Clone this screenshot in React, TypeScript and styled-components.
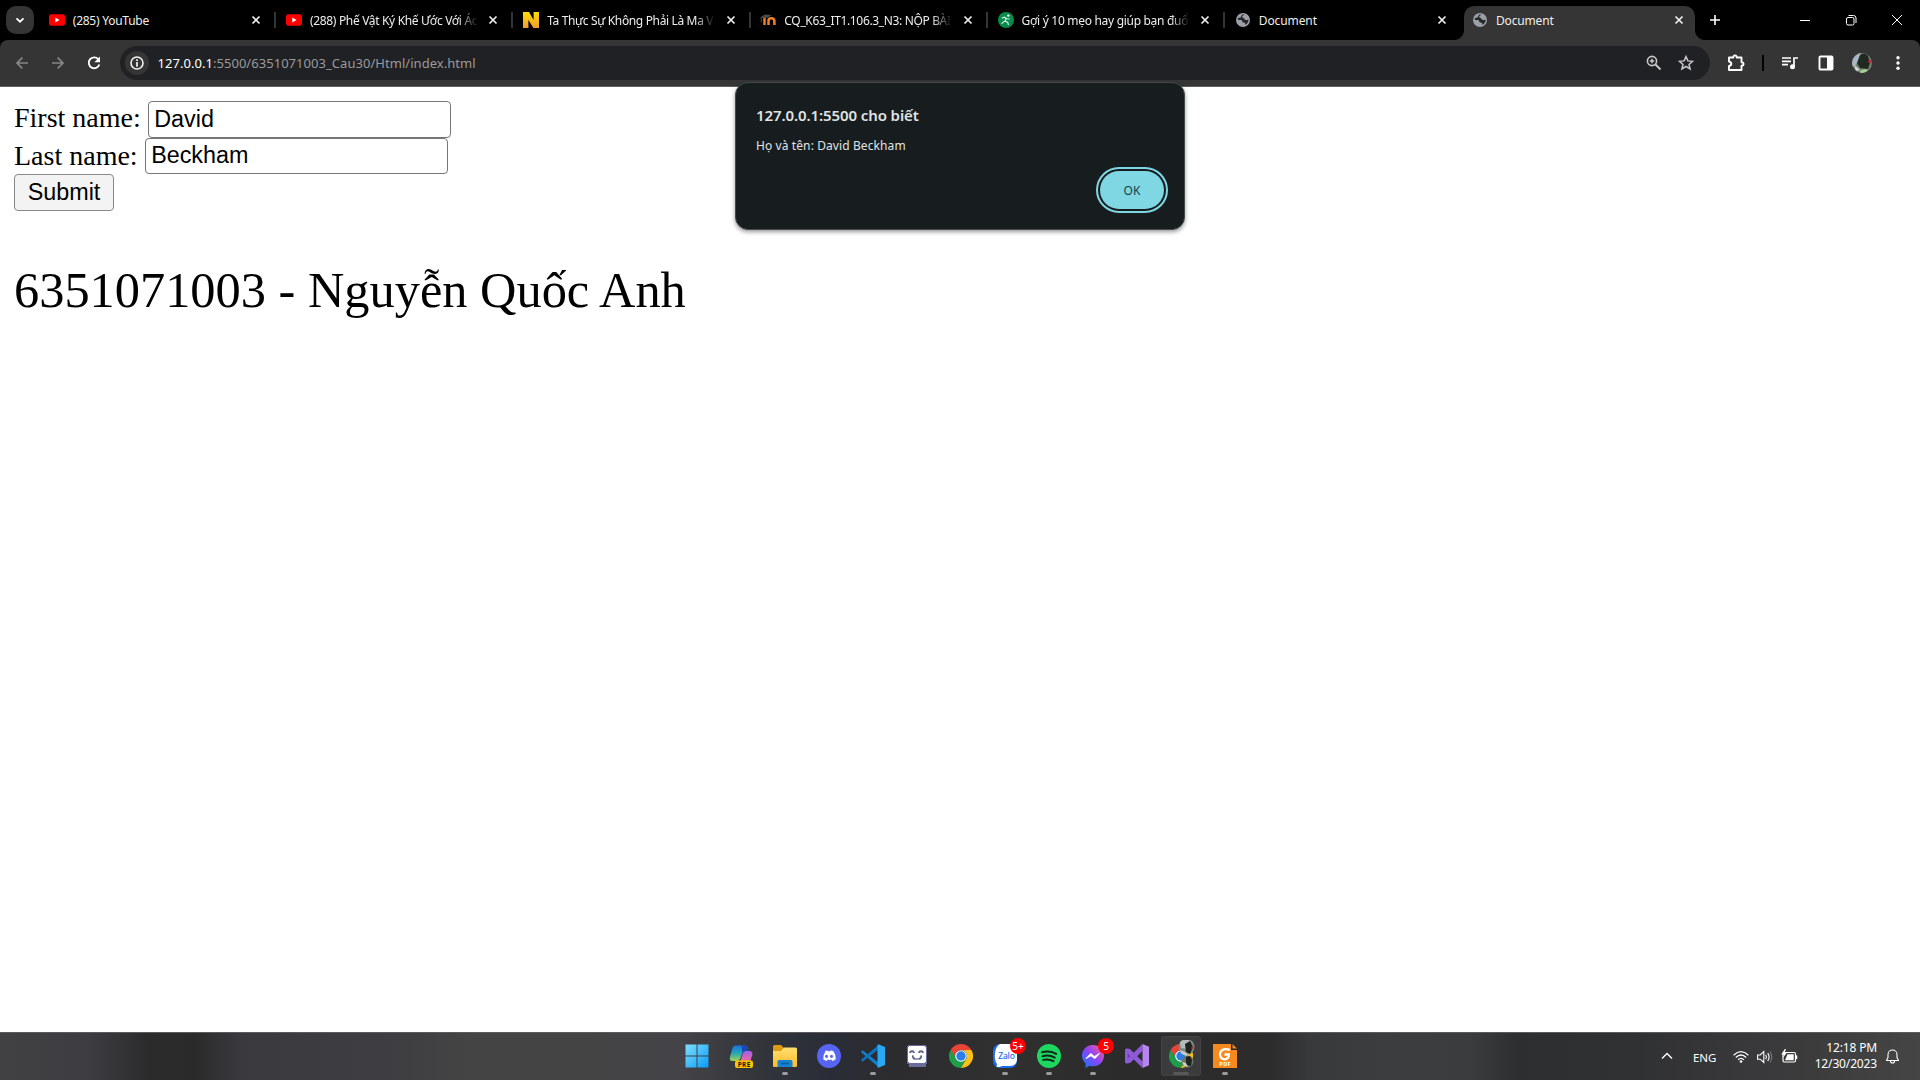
import React from "react";
import styled, { createGlobalStyle, css } from "styled-components";

const ui = `"Noto Sans", "Open Sans", sans-serif`;

const Global = createGlobalStyle`
  html, body { margin: 0; padding: 0; background: #fff; }
  * { box-sizing: border-box; }
`;

const Screen = styled.div`
  width: 1920px;
  height: 1080px;
  overflow: hidden;
  display: flex;
  flex-direction: column;
  font-family: ${ui};
  position: relative;
`;

/* ---------- tab strip ---------- */
const TabStrip = styled.div`
  height: 40px;
  background: #000;
  display: flex;
  align-items: stretch;
  flex: none;
`;
const TabSearch = styled.div`
  width: 28px;
  height: 28px;
  margin: 6px 4px 0 6px;
  border-radius: 10px;
  background: #353535;
  display: grid;
  place-items: center;
`;
const Tab = styled.div<{ $active?: boolean; $sep?: boolean }>`
  width: ${(p) => (p.$active ? 231 : 237.2)}px;
  height: ${(p) => (p.$active ? 34 : 40)}px;
  margin: ${(p) => (p.$active ? "6px 0 0 2.8px" : "0")};
  padding: ${(p) => (p.$active ? "0 8px 6px 8px" : "0 11px 0 10.8px")};
  display: flex;
  align-items: center;
  position: relative;
  flex: none;
  ${(p) =>
    p.$active &&
    css`
      background: #353535;
      border-radius: 10px 10px 0 0;
      &::before,
      &::after {
        content: "";
        position: absolute;
        bottom: 0;
        width: 10px;
        height: 10px;
      }
      &::before {
        left: -10px;
        background: radial-gradient(circle at 0 0, transparent 9.5px, #353535 10.5px);
      }
      &::after {
        right: -10px;
        background: radial-gradient(circle at 100% 0, transparent 9.5px, #353535 10.5px);
      }
    `}
  ${(p) =>
    p.$sep &&
    css`
      &::after {
        content: "";
        position: absolute;
        right: -1px;
        top: 12px;
        width: 2px;
        height: 16px;
        background: #353535;
      }
    `}
`;
const TabTitle = styled.div<{ $fade?: boolean; $ls: number }>`
  margin-left: 8px;
  width: 168px;
  font-size: 12px;
  line-height: 18px;
  letter-spacing: ${(p) => p.$ls}px;
  color: #eee;
  white-space: nowrap;
  overflow: hidden;
  flex: none;
  padding-top: 1px;
  ${(p) =>
    p.$fade &&
    css`
      mask-image: linear-gradient(90deg, #000 148px, transparent 168px);
    `}
`;
const TabClose = styled.svg`
  margin-left: auto;
  flex: none;
`;
const NewTab = styled.div`
  width: 40px;
  height: 40px;
  display: grid;
  place-items: center;
`;
const WindowButtons = styled.div`
  margin-left: auto;
  display: flex;
  width: 138px;
`;
const WinBtn = styled.div`
  width: 46px;
  height: 40px;
  display: grid;
  place-items: center;
`;

/* ---------- toolbar ---------- */
const ToolbarBack = styled.div`
  background: #000;
  flex: none;
`;
const Toolbar = styled.div`
  height: 47px;
  background: #353535;
  border-bottom: 1px solid #5e5e5e;
  border-radius: 8px 8px 0 0;
  display: flex;
  align-items: flex-start;
  padding-top: 6px;
`;
const NavBtn = styled.div<{ $w: number }>`
  width: ${(p) => p.$w}px;
  height: 34px;
  display: grid;
  place-items: center;
  flex: none;
`;
const NavGroup = styled.div`
  display: flex;
  flex: none;
  width: 120px;
  padding-left: 4px;
`;
const Omnibox = styled.div`
  width: 1590px;
  flex: none;
  height: 34px;
  border-radius: 17px;
  background: #202124;
  display: flex;
  align-items: center;
  padding: 0 8px 0 5px;
`;
const SiteInfo = styled.div`
  width: 24px;
  height: 24px;
  border-radius: 50%;
  background: #353535;
  display: grid;
  place-items: center;
`;
const Url = styled.div`
  margin-left: 8.5px;
  font-size: 13px;
  letter-spacing: 0.04px;
  line-height: 20px;
  color: #9a9a9b;
  white-space: nowrap;
  flex: 1;
  padding-bottom: 1px;
  b {
    font-weight: 400;
    color: #fff;
  }
`;
const VBar = styled.div`
  width: 2px;
  height: 16px;
  margin: 9px 8px 0 0;
  background: #000;
`;

/* ---------- page ---------- */
const Page = styled.main`
  height: 945px;
  background: #fff;
  padding: 14px;
  font-family: "Liberation Serif", "Times New Roman", serif;
  font-size: 28px;
  color: #000;
  flex: none;
`;
const FormRow = styled.label<{ $h: number }>`
  display: flex;
  height: ${(p) => p.$h}px;
  line-height: ${(p) => (p.$h > 36 ? 34 : 35)}px;
  white-space: pre;
`;
const Field = styled.input<{ $h: number }>`
  width: 303px;
  height: ${(p) => p.$h}px;
  border: 1px solid #767676;
  border-radius: 4px;
  padding: 0 5.5px ${(p) => (p.$h > 36 ? 0 : 2)}px;
  margin: 0;
  font: 23.33px "Liberation Sans", Arial, sans-serif;
  color: #000;
  background: #fff;
  outline: none;
`;
const Submit = styled.button`
  display: block;
  width: 100px;
  height: 37px;
  border: 1px solid #8a8a8a;
  border-radius: 4px;
  background: #f3f3f3;
  padding: 0;
  font: 23.33px "Liberation Sans", Arial, sans-serif;
  color: #000;
`;
const Student = styled.p`
  margin: 50px 0 0;
  font-size: 50.4px;
  line-height: 58px;
  white-space: nowrap;
`;

/* ---------- alert ---------- */
const Dialog = styled.section`
  position: absolute;
  left: 735px;
  top: 82px;
  width: 450px;
  height: 148px;
  border: 1px solid #414a4c;
  border-radius: 13px;
  background: #171d1f;
  box-shadow: 0 2px 4px rgba(0, 0, 0, 0.4);
  padding: 21px 20px;
  color: #e0e3e4;
  display: flex;
  flex-direction: column;
`;
const DialogTitle = styled.h1`
  margin: 0;
  font-size: 15px;
  font-weight: 600;
  line-height: 22px;
  letter-spacing: -0.1px;
`;
const DialogText = styled.div`
  margin-top: 11px;
  font-size: 12px;
  line-height: 18px;
  letter-spacing: 0.1px;
`;
const OkButton = styled.button`
  align-self: flex-end;
  margin: 16px 0 0;
  width: 64px;
  height: 38px;
  flex: none;
  border: 0;
  border-radius: 19px;
  background: #7fd7e3;
  color: #12434c;
  font: 400 12px ${ui};
  outline: 2px solid #7fd7e3;
  outline-offset: 2px;
  padding: 0;
`;

/* ---------- taskbar ---------- */
const Taskbar = styled.footer`
  height: 48px;
  flex: none;
  border-top: 1px solid #5b5b5d;
  background: linear-gradient(
    90deg,
    #414142 0, #3d3c41 90px, #2b2b2c 150px, #2a2a2b 195px, #3a393e 240px, #3d3d42 380px,
    #444 470px, #444 580px, #444347 680px, #33353b 760px, #2a2d37 830px, #2c2c2e 900px,
    #303031 1000px, #2b2b2c 1120px, #2c2c2d 1270px, #38393b 1310px, #3c3d3f 1390px, #3b3c3e 1470px,
    #2d2e2f 1520px, #303132 1640px, #38383a 1740px, #3b3b3c 1800px, #454546 1920px
  );
  display: grid;
  grid-template-columns: 675px 1fr auto;
`;
const Apps = styled.div`
  display: flex;
  grid-column: 2;
  padding-top: 3px;
`;
const AppSlot = styled.div<{ $active?: boolean }>`
  width: 40px;
  height: 40px;
  margin: 0 2px;
  border-radius: 4px;
  position: relative;
  display: grid;
  place-items: center;
  flex: none;
  ${(p) =>
    p.$active &&
    css`
      background: #3b3b3d;
      box-shadow: inset 0 0 0 1px #434345;
    `}
`;
const Running = styled.i<{ $w: number }>`
  position: absolute;
  left: ${(p) => 20 - p.$w / 2}px;
  bottom: 1px;
  width: ${(p) => p.$w}px;
  height: 3px;
  border-radius: 2px;
  background: ${(p) => (p.$w > 8 ? "#58585a" : "#9b9b9d")};
`;
const Count = styled.span`
  position: absolute;
  right: -1px;
  top: 2px;
  width: 16px;
  height: 16px;
  border-radius: 50%;
  background: #f00;
  color: #fff;
  font-size: 10px;
  line-height: 16px;
  text-align: center;
`;
const Tray = styled.div`
  grid-column: 3;
  display: flex;
  align-items: center;
  color: #fff;
  padding-right: 20px;
  font-size: 12px;
`;
const Lang = styled.span`
  width: 24px;
  margin: 1px 16px 0 20px;
  font-size: 11.5px;
  letter-spacing: -0.1px;
`;
const Quick = styled.div`
  display: flex;
  gap: 8px;
`;
const Clock = styled.div`
  width: 70px;
  margin: 0 8px 1px 9px;
  text-align: right;
  line-height: 16px;
  letter-spacing: -0.15px;
  font-size: 12px;
  white-space: nowrap;
`;

/* ---------- icons ---------- */
const YouTube = () => (
  <svg width="16" height="16" viewBox="0 0 16 16">
    <rect y="2.3" width="16" height="11.4" rx="2.6" fill="#f00" />
    <path d="M6.3 5.6v4.8L10.5 8z" fill="#fff" />
  </svg>
);
const NLogo = () => (
  <svg width="16" height="16" viewBox="0 0 16 16">
    <defs>
      <linearGradient id="ny" x1="0" y1="0" x2="0" y2="1">
        <stop offset="0" stopColor="#ffdf00" />
        <stop offset="1" stopColor="#f09a38" />
      </linearGradient>
    </defs>
    <path d="M0 0h6l4.6 8V0H16v16h-5.600L5.400 8v8H0z" fill="url(#ny)" />
  </svg>
);
const Moodle = () => (
  <svg width="16" height="16" viewBox="0 0 16 16">
    <path d="M4.500 5.500V13" stroke="#f58220" strokeWidth="2.400" />
    <path d="M8.500 13V8.800Q8.500 6.300 11.300 6.300T14.400 8.800V13" fill="none" stroke="#f58220" strokeWidth="2.500" />
    <path d="M0 5.500 5 2.500l6.500.400-3.300 2.700-4 .600z" fill="#4a4a4a" />
    <path d="M1.200 5.500v5" stroke="#555" strokeWidth=".8" />
  </svg>
);
const Runner = () => (
  <svg width="16" height="16" viewBox="0 0 16 16">
    <circle cx="8" cy="8" r="8" fill="#078c4b" />
    <circle cx="10.300" cy="3.600" r="1.200" fill="#fff" />
    <path d="m3.800 6.200 2.600-1 2.400 1.600 2.800.200M8.200 6.200 7 9l2.800 1.400.600 2.600M7 9l-3.600 2.600" fill="none" stroke="#e3f5e9" strokeWidth="1.100" />
  </svg>
);
const Globe = () => (
  <svg width="16" height="16" viewBox="0 0 16 16">
    <circle cx="8" cy="8" r="7" fill="#9aa0a6" />
    <path d="M9.3 2.600C8.600 3.800 7.300 3.600 7.200 4.700c-.1.900.8 1 1.500 1.300.9.400.6 1.500 1.600 1.800 1.100.4 2-.2 3.200-.1.100 2.200-1.200 4.300-3.200 5.200.3-1.200-.1-1.900-1.100-2.100-1-.2-1.900-.5-2-1.500-.1-.9-.7-1.300-1.700-1.300H2.800C2.700 7.100 3 6.200 3.500 5.400c1 .9 2.200.4 2.500-.6.2-.9.900-1.400 1.400-2.200z" fill="#26282b" />
  </svg>
);
const CloseX = () => (
  <TabClose width="16" height="16" viewBox="0 0 16 16">
    <path d="m4.500 4.500 7 7m0-7-7 7" stroke="#eee" strokeWidth="1.7" />
  </TabClose>
);

const Chrome = () => (
  <svg width="24" height="24" viewBox="0 0 24 24">
    <path d="M1.600 6A12 12 0 0 0 12 24l5.200-9-5.200-3z" fill="#1e9d4b" />
    <path d="M1.600 6A12 12 0 0 1 22.400 6H12a6 6 0 0 0-5.200 3L6 12z" fill="#ea4335" />
    <path d="M22.400 6A12 12 0 0 1 12 24l5.200-9A6 6 0 0 0 12 6z" fill="#fbc116" />
    <circle cx="12" cy="12" r="5.800" fill="#fff" />
    <circle cx="12" cy="12" r="4.700" fill="#2b7de9" />
  </svg>
);
const Windows = () => (
  <svg width="24" height="24" viewBox="0 0 24 24">
    <defs>
      <linearGradient id="win" x1="0" y1="0" x2="1" y2="1">
        <stop offset="0" stopColor="#7fe0ff" />
        <stop offset="1" stopColor="#0a9bf5" />
      </linearGradient>
    </defs>
    <path d="M.500.500h11v11H.500zM12.500.500h11v11h-11zM.500 12.500h11v11H.500zM12.500 12.500h11v11h-11z" fill="url(#win)" />
  </svg>
);
const CopilotText = styled.text`
  font: 700 6.5px ${ui};
  letter-spacing: 0.3px;
`;
const Copilot = () => (
  <svg width="24" height="24" viewBox="0 0 24 24">
    <defs>
      <linearGradient id="cp1" x1="0" y1="0" x2="0" y2="1">
        <stop offset="0" stopColor="#1d6fe0" />
        <stop offset=".5" stopColor="#24a8b8" />
        <stop offset="1" stopColor="#a6d052" />
      </linearGradient>
      <linearGradient id="cp2" x1="0" y1="0" x2="0" y2="1">
        <stop offset="0" stopColor="#a45cf0" />
        <stop offset="1" stopColor="#f0708f" />
      </linearGradient>
    </defs>
    <path d="M17 7h3q4 0 3.300 4L21 18H11l3-9q1-2 3-2z" fill="url(#cp2)" />
    <path d="M6.500 1.500H16q2 0 2.500 2L19.500 7H16q-2 0-3 3l-1.500 4q-1 3-3.500 3H3.500Q0 17 1 13L3.500 4q.800-2.500 3-2.500z" fill="url(#cp1)" />
    <path d="M12.500 1.500H16q2 0 2.500 2L19.500 7H16q-2 0-2.700 2z" fill="#1947b8" />
    <rect x="6" y="16.500" width="18" height="7.500" rx="2" fill="#ffc400" />
    <CopilotText x="15.200" y="22.600" textAnchor="middle" fill="#211a00">PRE</CopilotText>
  </svg>
);
const Explorer = () => (
  <svg width="24" height="24" viewBox="0 0 24 24">
    <defs>
      <linearGradient id="fx" x1="0" y1="0" x2="0" y2="1">
        <stop offset="0" stopColor="#ffe06e" />
        <stop offset="1" stopColor="#fbba2c" />
      </linearGradient>
    </defs>
    <path d="M0 2.500Q0 1 1.500 1H8l3 3h6v6H0z" fill="#dc9a15" />
    <path d="M0 7h8l3-3.500h11.500Q24 3.500 24 5v17q0 1-1 1H1q-1 0-1-1z" fill="url(#fx)" />
    <path d="M4.500 23v-5.500q0-1.500 1.500-1.500h12q1.500 0 1.500 1.500V23z" fill="#1583d1" />
    <path d="M8 19.500h8" stroke="#0b5c9e" strokeWidth="1.600" />
  </svg>
);
const Discord = () => (
  <svg width="24" height="24" viewBox="0 0 24 24">
    <circle cx="12" cy="12" r="12" fill="#5865f2" />
    <path d="M7.500 7.300q1.400-.700 2.900-.900l.500.900q1.100-.200 2.200 0l.500-.900q1.500.200 2.900.900 2.600 4 2.300 8-1.600 1.300-3.500 1.800l-.800-1.300.900-.500q-2.900 1.200-5.800 0l.900.500-.800 1.300q-1.900-.500-3.500-1.800-.300-4.200 2.300-8z" fill="#fff" />
    <ellipse cx="9.500" cy="12.300" rx="1.500" ry="1.600" fill="#5865f2" />
    <ellipse cx="14.500" cy="12.300" rx="1.500" ry="1.600" fill="#5865f2" />
  </svg>
);
const VSCode = () => (
  <svg width="24" height="24" viewBox="0 0 24 24">
    <path d="M1.600 6.200 18 19v4.500L.300 8.500Q-.200 8 .300 7.500z" fill="#0f7fcb" />
    <path d="M1.600 17.800 18 5V.500L.300 15.500q-.500.500 0 1z" fill="#0a72bd" />
    <path d="M17.200.200 24 3v18l-6.800 2.800q-.700-.300-.700-.800V1q0-.500.700-.800z" fill="#2aa9f2" />
  </svg>
);
const Smiley = () => (
  <svg width="22" height="22" viewBox="0 0 22 22">
    <path d="M2 0h18v1h1v18h-1v3H3v-3H1V1h1z" fill="#6a6d9c" />
    <path d="M3 1h16v1h1v15h-1v1H3v-1H2V2h1z" fill="#fff" />
    <path d="M4 8V7h1V6h2v1h1v1M13 8V7h1V6h2v1h1v1M6 11h1v2h1v1h6v-1h1v-2h1" fill="none" stroke="#35376a" strokeWidth="1.200" />
  </svg>
);
const ZaloText = styled.text`
  font: 500 8.5px ${ui};
  letter-spacing: -0.2px;
`;
const Zalo = () => (
  <svg width="24" height="24" viewBox="0 0 24 24">
    <rect width="24" height="24" rx="7" fill="#1a6df0" />
    <path d="M7 0h10q7 0 7 7v8q0 7-7 7H9q-3 1.500-6 .500 1.500-1 1-2.500Q1 16 2 9 3 2 7 0z" fill="#fff" />
    <ZaloText x="13.500" y="14.500" textAnchor="middle" fill="#1a6df0">Zalo</ZaloText>
  </svg>
);
const Spotify = () => (
  <svg width="24" height="24" viewBox="0 0 24 24">
    <circle cx="12" cy="12" r="12" fill="#1ed760" />
    <path d="M5 8.300q7.500-2.100 14.200 1.500M5.600 12.200q6.500-1.800 12.200 1.400M6.200 15.900q5.600-1.400 10.300 1.300" fill="none" stroke="#10251a" strokeWidth="2" strokeLinecap="round" />
  </svg>
);
const Messenger = () => (
  <svg width="24" height="24" viewBox="0 0 24 24">
    <defs>
      <linearGradient id="ms" x1="0" y1="1" x2="1" y2="0">
        <stop offset="0" stopColor="#0a7cff" />
        <stop offset=".5" stopColor="#8a45fb" />
        <stop offset="1" stopColor="#ff5c87" />
      </linearGradient>
    </defs>
    <path d="M12 1C5.500 1 1 5.700 1 11.500c0 3.400 1.300 5.800 3.500 7.700V24l4-2.300q1.700.500 3.500.500c6.500 0 11-4.700 11-10.500S18.500 1 12 1z" fill="url(#ms)" />
    <path d="m5 14.500 4.700-5 3.700 3 5.100-3-4.700 5.200-3.800-3z" fill="#fff" stroke="#fff" strokeWidth="1" />
  </svg>
);
const VisualStudio = () => (
  <svg width="24" height="24" viewBox="0 0 24 24">
    <path d="M0 5.300 2 4.500 6 7.500v9L2 19.500l-2-1z" fill="#6d3fb5" />
    <path d="M2 4.500 5 5l12.500 12.500V24L2.800 9.500v5L17.500 0v7L5 19l-3 .500-2-1V5.300z" fill="#8e5bd6" />
    <path d="M17.500 0 24 2.800v18.400L17.500 24z" fill="#b785f2" />
  </svg>
);
const ChromeProfile = () => (
  <svg width="32" height="32" viewBox="0 0 32 32">
    <g transform="translate(4 4)">
      <Chrome />
    </g>
    <circle cx="21.500" cy="7" r="8" fill="#7f8780" />
    <path d="M15 2q4-3.500 9-2l3 5-4 4-7-1z" fill="#b5bab8" />
    <path d="m20 4 5-3 3 6-3 7-4-2z" fill="#1d231d" />
    <path d="m15 10 5 2 4 3-4 .500-4-2z" fill="#c5cbc2" />
    <circle cx="27.500" cy="8" r="1.200" fill="#b3344a" />
    <circle cx="22.500" cy="21.500" r="6" fill="#6b716b" />
    <path d="m21 17 4-1 2 4-1 6-5-1z" fill="#1d231d" />
    <path d="m17 22 4 1 2 4-4-1z" fill="#cfd4cb" />
  </svg>
);
const PdfText = styled.text`
  font: 700 5.5px ${ui};
  letter-spacing: 0.4px;
`;
const FoxitPdf = () => (
  <svg width="24" height="24" viewBox="0 0 24 24">
    <path d="M0 0h18v6h6v18H0z" fill="#f78a1e" />
    <path d="M19.500 0v4.500H24z" fill="#f78a1e" />
    <path d="M17 5.800Q9.500 3.500 7.300 8.500C6 12.500 8.500 15.300 11.500 15.300S16 13 15.800 10.500H11.500" fill="none" stroke="#fff" strokeWidth="2.300" />
    <PdfText x="12.200" y="22.200" textAnchor="middle" fill="#fff">PDF</PdfText>
  </svg>
);

const tabs = [
  { icon: <YouTube />, title: "(285) YouTube", ls: -0.25 },
  { icon: <YouTube />, title: "(288) Phế Vật Ký Khế Ước Với Ác", fade: true, ls: -0.33 },
  { icon: <NLogo />, title: "Ta Thực Sự Không Phải Là Ma V", fade: true, ls: -0.35 },
  { icon: <Moodle />, title: "CQ_K63_IT1.106.3_N3: NỘP BÀI", fade: true, ls: -0.35 },
  { icon: <Runner />, title: "Gợi ý 10 mẹo hay giúp bạn đuổ", fade: true, ls: -0.3 },
  { icon: <Globe />, title: "Document", ls: -0.1 },
  { icon: <Globe />, title: "Document", ls: -0.15, active: true },
];

const apps: { icon: React.ReactNode; run?: number; count?: string; active?: boolean }[] = [
  { icon: <Windows /> },
  { icon: <Copilot /> },
  { icon: <Explorer />, run: 6 },
  { icon: <Discord /> },
  { icon: <VSCode />, run: 6 },
  { icon: <Smiley /> },
  { icon: <Chrome /> },
  { icon: <Zalo />, run: 6, count: "5+" },
  { icon: <Spotify />, run: 6 },
  { icon: <Messenger />, run: 6, count: "5" },
  { icon: <VisualStudio /> },
  { icon: <ChromeProfile />, run: 16, active: true },
  { icon: <FoxitPdf />, run: 6 },
];

export default function App() {
  return (
    <Screen>
      <Global />
      <TabStrip>
        <TabSearch>
          <svg width="12" height="12" viewBox="0 0 12 12">
            <path d="m2.500 4.300 3.500 3.400 3.500-3.400" fill="none" stroke="#fff" strokeWidth="1.800" />
          </svg>
        </TabSearch>
        {tabs.map((t, i) => (
          <Tab key={i} $active={t.active} $sep={i < 5}>
            {t.icon}
            <TabTitle $fade={t.fade} $ls={t.ls}>{t.title}</TabTitle>
            <CloseX />
          </Tab>
        ))}
        <NewTab>
          <svg width="12" height="12" viewBox="0 0 12 12">
            <path d="M6 1v10M1 6h10" stroke="#fff" strokeWidth="1.600" />
          </svg>
        </NewTab>
        <WindowButtons>
          <WinBtn>
            <svg width="12" height="12" viewBox="0 0 12 12"><path d="M1 6.500h10" stroke="#fff" /></svg>
          </WinBtn>
          <WinBtn>
            <svg width="12" height="12" viewBox="0 0 12 12" fill="none" stroke="#fff">
              <rect x="1.500" y="3.500" width="7.500" height="7.500" rx="1.500" />
              <path d="M3.500 1.500h5q2.500 0 2.500 2.500v5" />
            </svg>
          </WinBtn>
          <WinBtn>
            <svg width="12" height="12" viewBox="0 0 12 12"><path d="m1 1 10 10m0-10L1 11" stroke="#fff" /></svg>
          </WinBtn>
        </WindowButtons>
      </TabStrip>

      <ToolbarBack>
        <Toolbar>
          <NavGroup>
            <NavBtn $w={36}>
              <svg width="14" height="14" viewBox="0 0 14 14"><path d="M13 7H2m5.300-5.300L2 7l5.300 5.300" fill="none" stroke="#868686" strokeWidth="1.700" /></svg>
            </NavBtn>
            <NavBtn $w={35}>
              <svg width="14" height="14" viewBox="0 0 14 14"><path d="M1 7h11M6.700 1.700 12 7l-5.300 5.300" fill="none" stroke="#868686" strokeWidth="1.700" /></svg>
            </NavBtn>
            <NavBtn $w={38}>
              <svg width="14" height="14" viewBox="0 0 14 14">
                <path d="M11.200 3.200A5.400 5.400 0 1 0 12.300 8.500" fill="none" stroke="#fff" strokeWidth="1.900" />
                <path d="M13 .500V6.200H7.400z" fill="#fff" />
              </svg>
            </NavBtn>
          </NavGroup>
          <Omnibox>
            <SiteInfo>
              <svg width="14" height="14" viewBox="0 0 14 14">
                <circle cx="7" cy="7" r="6" fill="none" stroke="#f1f1f1" strokeWidth="1.600" />
                <path d="M7 3.200v1.700M7 6v4.800" stroke="#f1f1f1" strokeWidth="1.700" />
              </svg>
            </SiteInfo>
            <Url><b>127.0.0.1</b>:5500/6351071003_Cau30/Html/index.html</Url>
            <NavBtn $w={32}>
              <svg width="16" height="16" viewBox="0 0 16 16" fill="none" stroke="#c7c7c7">
                <circle cx="6" cy="6" r="4.600" strokeWidth="1.600" />
                <path d="m9.500 9.500 5 5" strokeWidth="2" />
                <path d="M6 3.800v4.400M3.800 6h4.400" strokeWidth="1.500" />
              </svg>
            </NavBtn>
            <NavBtn $w={32}>
              <svg width="16" height="16" viewBox="0 0 16 16">
                <path d="m8 1.600 1.900 4.300 4.700.4-3.600 3.100 1.100 4.600L8 11.500 3.900 14 5 9.400 1.400 6.300l4.700-.4z" fill="none" stroke="#c7c7c7" strokeWidth="1.500" />
              </svg>
            </NavBtn>
          </Omnibox>
          <NavBtn $w={52}>
            <svg width="18" height="18" viewBox="0 0 18 18">
              <path d="M2 3.500h4.300q-.2-2 1.700-2t1.700 2h4.800v4.800q2 0 2 1.700t-2 1.700v4.300H2v-4q2.300-.300 2.300-2.200T2 7.600z" fill="none" stroke="#fff" strokeWidth="1.900" strokeLinejoin="round" />
            </svg>
          </NavBtn>
          <VBar />
          <NavBtn $w={36}>
            <svg width="18" height="18" viewBox="0 0 18 18">
              <path d="M1 4h9M1 7.300h9M1 10.600h6M13 12.500V4h4" fill="none" stroke="#fff" strokeWidth="1.700" />
              <circle cx="11.500" cy="12.700" r="2.500" fill="#fff" />
            </svg>
          </NavBtn>
          <NavBtn $w={36}>
            <svg width="16" height="16" viewBox="0 0 16 16">
              <rect x="1.500" y="1.500" width="13" height="13" rx="1" fill="none" stroke="#fff" strokeWidth="1.900" />
              <path d="M9 1.500h5.500v13H9z" fill="#fff" />
            </svg>
          </NavBtn>
          <NavBtn $w={36}>
            <svg width="20" height="20" viewBox="0 0 20 20">
              <defs><clipPath id="av"><circle cx="10" cy="10" r="10" /></clipPath></defs>
              <g clipPath="url(#av)">
                <rect width="20" height="20" fill="#6f7f70" />
                <path d="M0 0h9L6 8l-3 5H0z" fill="#a9b6c4" />
                <path d="M8 2q5-3 8 1l2 7-2 6-8-1-3-5z" fill="#20281f" />
                <path d="m2 12 3 2 3 3-4 1z" fill="#cfd8d4" />
                <path d="M8 18q4-3 8-1l-3 3H8z" fill="#a6cf96" />
                <circle cx="18" cy="8.500" r="1.700" fill="#c5283d" />
              </g>
            </svg>
          </NavBtn>
          <NavBtn $w={36}>
            <svg width="4" height="16" viewBox="0 0 4 16" fill="#fff"><circle cx="2" cy="2.700" r="1.700" /><circle cx="2" cy="8" r="1.700" /><circle cx="2" cy="13.300" r="1.700" /></svg>
          </NavBtn>
        </Toolbar>
      </ToolbarBack>

      <Page>
        <FormRow $h={37}>First name: <Field $h={37} defaultValue="David" /></FormRow>
        <FormRow $h={36}>Last name: <Field $h={36} defaultValue="Beckham" /></FormRow>
        <Submit>Submit</Submit>
        <Student>6351071003 - Nguyễn Quốc Anh</Student>
      </Page>

      <Taskbar>
        <Apps>
          {apps.map((a, i) => (
            <AppSlot key={i} $active={a.active}>
              {a.icon}
              {a.run && <Running $w={a.run} />}
              {a.count && <Count>{a.count}</Count>}
            </AppSlot>
          ))}
        </Apps>
        <Tray>
          <svg width="12" height="12" viewBox="0 0 12 12"><path d="m1 7.500 5-5 5 5" fill="none" stroke="#fff" strokeWidth="1.400" /></svg>
          <Lang>ENG</Lang>
          <Quick>
            <svg width="16" height="16" viewBox="0 0 16 16" fill="none" stroke="#fff" strokeWidth="1.200">
              <path d="M.600 6.200q7.400-7 14.800 0M2.800 8.500q5.200-5 10.400 0M5 10.800q3-3 6 0" />
              <circle cx="8" cy="12.500" r="1.300" fill="#fff" stroke="none" />
            </svg>
            <svg width="16" height="16" viewBox="0 0 16 16" fill="none" stroke="#fff" strokeWidth="1.100">
              <path d="M.600 6v4.200h2.600L6.800 13.500v-11L3.200 6zM8.700 5.800q1.500 2.200 0 4.400M10.700 4.200q2.800 3.800 0 7.600" />
              <path d="M12.800 2.600q4 5.400 0 10.800" stroke="#777" />
            </svg>
            <svg width="17" height="16" viewBox="0 0 17 16">
              <rect x="2" y="3.500" width="12.500" height="9.500" rx="1.500" fill="none" stroke="#fff" strokeWidth="1.200" />
              <path d="M6.500 5.300h6.200v6H4zM15 6.500h1.300v3.500H15z" fill="#fff" />
              <path d="M3.800 0 .300 5.500h2.500L1.800 9l4-5.300H3.500L5 0z" fill="#fff" />
            </svg>
          </Quick>
          <Clock>12:18 PM<br />12/30/2023</Clock>
          <svg width="15" height="16" viewBox="0 0 15 16" fill="none" stroke="#fff" strokeWidth="1.100">
            <path d="M1.500 11.500h12l-1.500-3V5.500a4.500 4.500 0 0 0-9 0v3zM5.500 12a2 2 0 0 0 4 0" strokeLinejoin="round" />
          </svg>
        </Tray>
      </Taskbar>

      <Dialog>
        <DialogTitle>127.0.0.1:5500 cho biết</DialogTitle>
        <DialogText>Họ và tên: David Beckham</DialogText>
        <OkButton>OK</OkButton>
      </Dialog>
    </Screen>
  );
}
